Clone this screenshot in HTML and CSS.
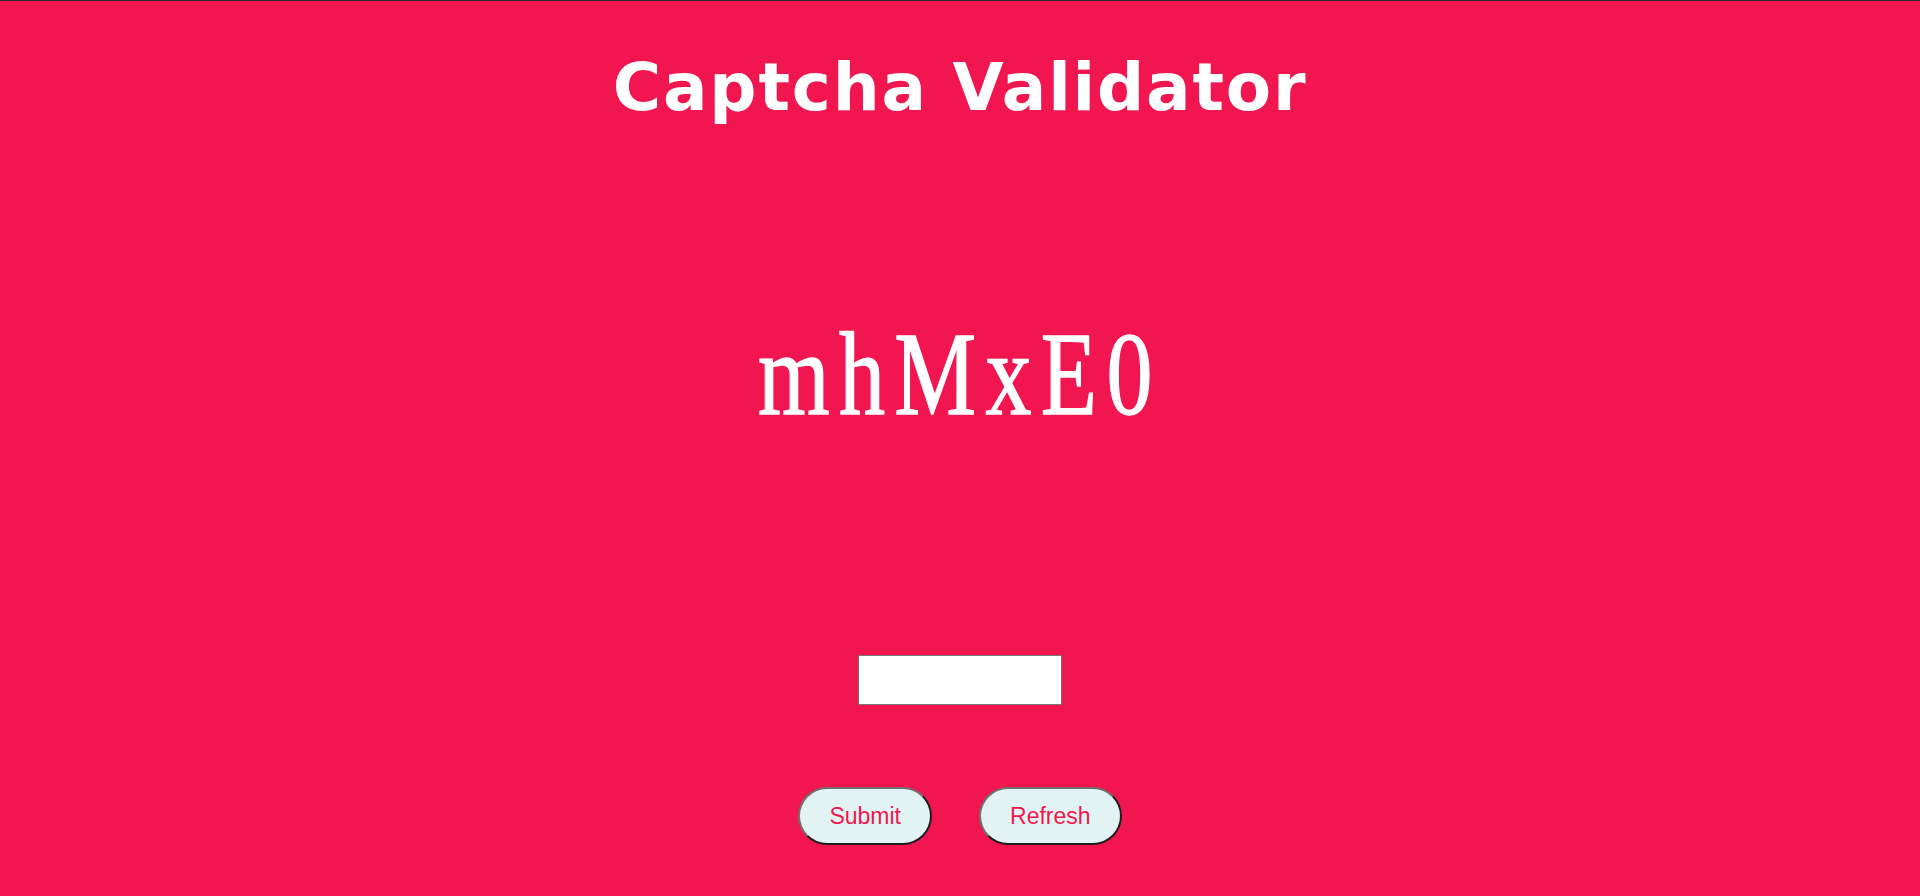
FILE: index.html
```html
<!DOCTYPE html>
<html lang="en">
<head>
<meta charset="utf-8">
<title>Captcha Validator</title>
<link rel="stylesheet" href="styles.css">
</head>
<body>
<main class="app">
  <h1 class="title">Captcha Validator</h1>
  <div class="captcha"><span class="captcha-text">mhMxE0</span></div>
  <input class="answer" type="text" aria-label="Captcha answer">
  <div class="actions">
    <button class="btn" type="button">Submit</button>
    <button class="btn" type="button">Refresh</button>
  </div>
</main>
</body>
</html>
```
FILE: styles.css
```css
html, body {
  margin: 0;
  padding: 0;
  height: 100%;
}
body {
  background: #f1164f;
  border-top: 1px solid #2a2a2a;
  box-sizing: border-box;
  font-family: "Liberation Sans", Arial, sans-serif;
}
.app {
  display: flex;
  flex-direction: column;
  align-items: center;
}
.title {
  margin: 47px 0 0;
  font-family: "DejaVu Sans", Verdana, sans-serif;
  font-weight: 700;
  font-size: 66px;
  line-height: 80px;
  color: #ffffff;
  letter-spacing: 1.8px;
}
.captcha {
  margin-top: 187px;
  height: 120px;
  display: flex;
  justify-content: center;
}
.captcha-text {
  display: inline-block;
  font-family: "Liberation Serif", "Times New Roman", serif;
  font-size: 118px;
  line-height: 120px;
  letter-spacing: 12px;
  color: #ffffff;
  -webkit-text-stroke: 1.4px #ffffff;
  transform: scaleX(0.78);
  filter: blur(0.7px);
}
.answer {
  margin-top: 220px;
  width: 204px;
  height: 50px;
  box-sizing: border-box;
  border: 1px solid #767676;
  background: #ffffff;
  padding: 0 4px;
}
.actions {
  margin-top: 82px;
  display: flex;
  gap: 47px;
}
.btn {
  height: 58px;
  padding: 0 29px;
  border: 2px solid;
  border-color: #707070 #1e1e1e #1e1e1e #707070;
  border-radius: 30px;
  background: #e1f4f3;
  color: #f1164f;
  font-family: "Liberation Sans", Arial, sans-serif;
  font-size: 23px;
}
```
